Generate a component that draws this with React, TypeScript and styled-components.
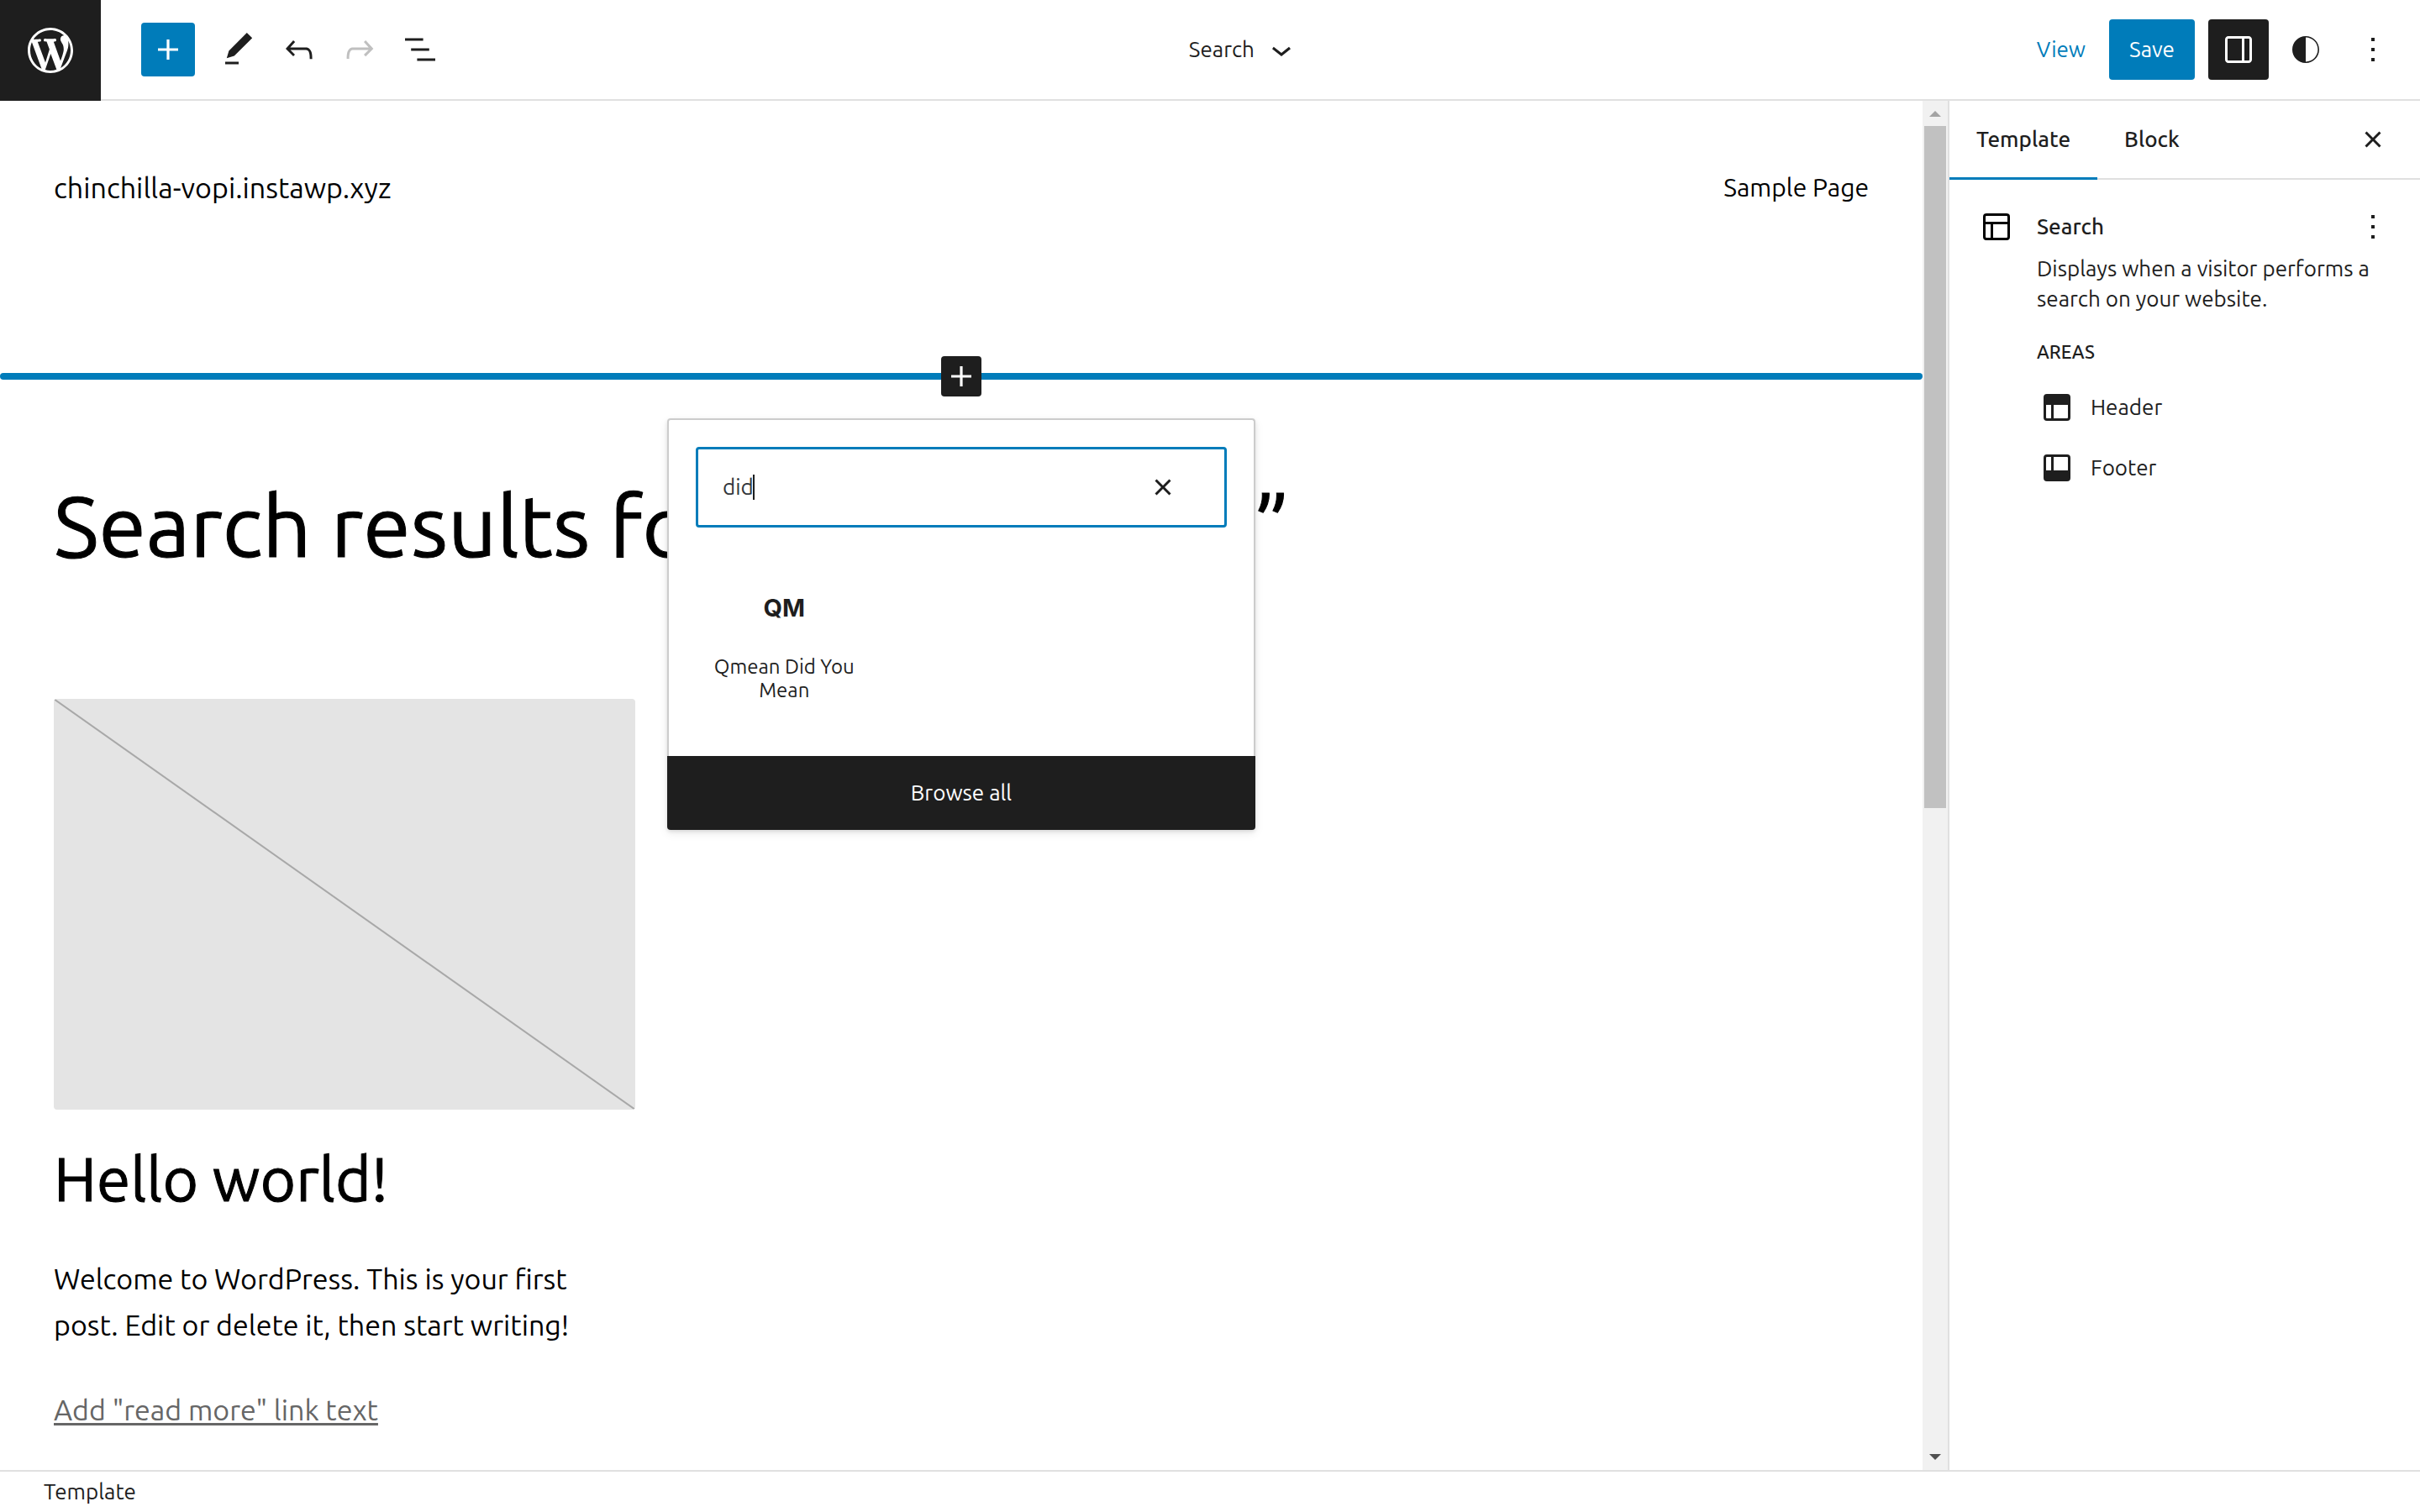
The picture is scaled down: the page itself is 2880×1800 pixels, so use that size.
import React, { useState } from 'react';
import styled, { createGlobalStyle } from 'styled-components';

const color = {
  ink: '#1e1e1e',
  accent: '#007cba',
  line: '#e0e0e0',
  muted: '#666',
};

const weight = {
  regular: 400,
  medium: 500,
};

const GlobalStyle = createGlobalStyle`
  *, *::before, *::after { box-sizing: border-box; }
  body {
    margin: 0;
    background: #fff;
    color: ${color.ink};
    font-family: "Ubuntu", "Noto Sans", sans-serif;
    font-size: 26px;
    font-weight: ${weight.regular};
    line-height: 36px;
  }
  h1, h2, h3, p, ul { margin: 0; padding: 0; }
  button, input { font: inherit; color: inherit; }
`;

/* ---------- icons ---------- */

const paths = {
  plus: 'M18 11.2h-5.2V6h-1.6v5.2H6v1.6h5.2V18h1.6v-5.2H18z',
  edit: 'M20.1 5.1L16.9 2 6.2 12.7l-1.3 4.4 4.5-1.3L20.1 5.1zM4 20.8h8v-1.5H4v1.5z',
  undo: 'M18.3 11.7c-.6-.6-1.4-.9-2.3-.9H6.7l2.9-3.3-1.1-1-4.5 5L8.5 16l1-1-2.7-2.7H16c.5 0 .9.2 1.3.5 1 1 1 3.4 1 4.5v.3h1.5v-.2c0-1.5 0-4.3-1.5-5.7z',
  redo: 'M15.6 6.5l-1.1 1 2.9 3.3H8c-.9 0-1.7.3-2.3.9-1.4 1.5-1.4 4.2-1.4 5.6v.2h1.5v-.3c0-1.1 0-3.5 1-4.5.3-.3.7-.5 1.3-.5h9.2L14.5 15l1.1 1.1 4.6-4.6-4.6-5z',
  listView: 'M13.8 5.2H3v1.5h10.8V5.2zm-3.6 12v1.5H21v-1.5H10.2zm7.2-6H6.6v1.5h10.8v-1.5z',
  chevronDown: 'M17.5 11.6L12 16l-5.5-4.4.9-1.2L12 14l4.5-3.6 1 1.2z',
  drawer:
    'M18 4H6c-1.1 0-2 .9-2 2v12c0 1.1.9 2 2 2h12c1.1 0 2-.9 2-2V6c0-1.1-.9-2-2-2zm-4 14.5H6c-.3 0-.5-.2-.5-.5V6c0-.3.2-.5.5-.5h8v13zm4.5-.5c0 .3-.2.5-.5.5h-2.5v-13H18c.3 0 .5.2.5.5v12z',
  styles:
    'M12 4c-4.4 0-8 3.6-8 8s3.6 8 8 8 8-3.6 8-8-3.6-8-8-8zm0 15.2V4.8c4 0 7.2 3.2 7.2 7.2s-3.2 7.2-7.2 7.2z',
  more: 'M13 19h-2v-2h2v2zm0-6h-2v-2h2v2zm0-6h-2V5h2v2z',
  close:
    'M12 13.06l3.712 3.713 1.061-1.06L13.061 12l3.712-3.712-1.06-1.06L12 10.938 8.288 7.227l-1.061 1.06L10.939 12l-3.712 3.712 1.06 1.061L12 13.061z',
  layout:
    'M18 5.5H6a.5.5 0 00-.5.5v3h13V6a.5.5 0 00-.5-.5zm.5 5H10v8h8a.5.5 0 00.5-.5v-7.5zm-10 0h-3V18a.5.5 0 00.5.5h2.5v-8zM6 4h12a2 2 0 012 2v12a2 2 0 01-2 2H6a2 2 0 01-2-2V6a2 2 0 012-2z',
  header:
    'M18.5 10.5H10v8h8a.5.5 0 00.5-.5v-7.5zm-10 0h-3V18a.5.5 0 00.5.5h2.5v-8zM6 4h12a2 2 0 012 2v12a2 2 0 01-2 2H6a2 2 0 01-2-2V6a2 2 0 012-2z',
  footer:
    'M18 5.5h-8v8h8.5V6a.5.5 0 00-.5-.5zm-9.5 8h-3V6a.5.5 0 01.5-.5h2.5v8zM6 4h12a2 2 0 012 2v12a2 2 0 01-2 2H6a2 2 0 01-2-2V6a2 2 0 012-2z',
};

const Glyph = styled.svg`
  display: block;
  flex: none;
  width: 48px;
  height: 48px;
  fill: currentColor;
`;

function Icon({ name }: { name: keyof typeof paths }) {
  return (
    <Glyph viewBox="0 0 24 24" aria-hidden="true">
      <path fillRule="evenodd" clipRule="evenodd" d={paths[name]} />
    </Glyph>
  );
}

const LogoGlyph = styled.svg`
  display: block;
  width: 54px;
  height: 54px;
  fill: #fff;
`;

function WordPressLogo() {
  return (
    <LogoGlyph viewBox="0 0 20 20" aria-hidden="true">
      <path d="M20 10c0-5.51-4.49-10-10-10C4.48 0 0 4.49 0 10c0 5.52 4.48 10 10 10 5.52 0 10-4.48 10-10zM7.78 15.37L4.37 6.22c.55-.02 1.17-.08 1.17-.08.5-.06.44-1.13-.06-1.11 0 0-1.45.11-2.37.11-.18 0-.37 0-.58-.01C4.12 2.69 6.87 1.11 10 1.11c2.33 0 4.45.87 6.05 2.34-.68-.11-1.65.39-1.65 1.58 0 .74.45 1.36.9 2.1.35.61.55 1.36.55 2.46 0 1.49-1.4 5-1.4 5l-3.03-8.37c.54-.02.82-.17.82-.17.5-.05.44-1.25-.06-1.22 0 0-1.44.12-2.38.12-.87 0-2.33-.12-2.33-.12-.5-.03-.56 1.2-.06 1.22l.92.08 1.26 3.41zM17.41 10c.24-.64.74-1.87.43-4.25.7 1.29 1.05 2.71 1.05 4.25 0 3.29-1.73 6.24-4.4 7.78.97-2.59 1.94-5.2 2.92-7.78zM6.1 18.09C3.12 16.65 1.11 13.53 1.11 10c0-1.3.23-2.48.72-3.59C3.25 10.3 4.67 14.2 6.1 18.09zm4.03-6.63l2.58 6.98c-.86.29-1.76.45-2.71.45-.79 0-1.57-.11-2.29-.33.81-2.38 1.62-4.74 2.42-7.1z" />
    </LogoGlyph>
  );
}

/* ---------- shell ---------- */

const Shell = styled.div`
  display: grid;
  grid-template-rows: auto minmax(0, 1fr) auto;
  height: 100vh;
`;

const TopBar = styled.header`
  display: flex;
  height: 120px;
`;

const HomeLink = styled.a`
  display: grid;
  place-items: center;
  flex: none;
  width: 120px;
  background: ${color.ink};
`;

const TopBarContent = styled.div`
  display: flex;
  flex: 1;
  align-items: center;
  justify-content: space-between;
  padding: 0 20px 0 48px;
  border-bottom: 2px solid ${color.line};
`;

const Tools = styled.div`
  display: flex;
  gap: 20px;
  padding-right: 28px;
`;

const ToolGroup = styled.div`
  display: flex;
  gap: 8px;
`;

const IconButton = styled.button<{ $size?: number; $tone?: 'accent' | 'dark' }>`
  display: grid;
  place-items: center;
  flex: none;
  width: ${(p) => p.$size ?? 72}px;
  height: ${(p) => p.$size ?? 72}px;
  padding: 0;
  border: 0;
  border-radius: 4px;
  background: ${(p) => (p.$tone === 'accent' ? color.accent : p.$tone === 'dark' ? color.ink : 'transparent')};
  color: ${(p) => (p.$tone ? '#fff' : color.ink)};

  &:disabled { color: #c0c0c0; }
`;

const DocumentButton = styled.button`
  display: flex;
  align-items: center;
  gap: 8px;
  padding: 0;
  border: 0;
  background: none;
`;

const Actions = styled.div`
  display: flex;
  align-items: center;
  gap: 8px;
`;

const ViewLink = styled.a`
  padding: 0 20px;
  color: ${color.accent};
  text-decoration: none;
`;

const SaveButton = styled.button`
  height: 72px;
  margin-right: 8px;
  padding: 0 24px;
  border: 0;
  border-radius: 4px;
  background: ${color.accent};
  color: #fff;
`;

const Workspace = styled.div`
  display: grid;
  grid-template-columns: minmax(0, 1fr) 30px 562px;
  min-height: 0;
`;

const StatusBar = styled.footer`
  padding: 6px 52px;
  border-top: 2px solid ${color.line};
`;

/* ---------- canvas ---------- */

const Canvas = styled.main`
  overflow: hidden;
  color: #000;
  font-size: 34px;
  line-height: 55px;
`;

const SiteHeader = styled.div`
  display: flex;
  align-items: center;
  justify-content: space-between;
  padding: 76px 64px 173px;
`;

const SiteLink = styled.a<{ $nav?: boolean }>`
  color: inherit;
  font-size: ${(p) => (p.$nav ? 30 : 34)}px;
  text-decoration: none;
`;

const Insertion = styled.div`
  position: relative;
  display: flex;
  align-items: center;
  justify-content: center;

  &::before {
    content: "";
    position: absolute;
    inset: 20px 0;
    border-radius: 4px;
    background: ${color.accent};
  }

  & > button { position: relative; }
`;

const PostArea = styled.div`
  padding: 92px 64px 44px;
`;

const QueryTitle = styled.h1`
  font-size: 102px;
  font-weight: ${weight.regular};
  line-height: 122px;
  -webkit-text-stroke: 1px currentColor;
`;

const PostGrid = styled.div`
  display: grid;
  grid-template-columns: repeat(3, minmax(0, 1fr));
  gap: 42px;
  margin-top: 146px;
`;

const Post = styled.article`
  display: flex;
  flex-direction: column;
  align-items: flex-start;
`;

const FeaturedImage = styled.svg`
  display: block;
  width: 100%;
  aspect-ratio: 692 / 489;
  border-radius: 4px;
  background: #e4e4e4;
  stroke: #a8a8a8;
  stroke-width: 2;
`;

const PostTitle = styled.h2`
  margin: 40px 0 50px;
  font-size: 73px;
  font-weight: ${weight.regular};
  line-height: 84px;
  -webkit-text-stroke: 1px currentColor;
`;

const ReadMore = styled.a`
  margin-top: 46px;
  color: ${color.muted};
  text-decoration: underline;
  text-decoration-thickness: 3px;
  text-underline-offset: 3px;
`;

/* ---------- quick inserter ---------- */

const Popover = styled.section`
  position: absolute;
  z-index: 1;
  top: 74px;
  left: 50%;
  width: 700px;
  margin-left: -350px;
  border-radius: 4px;
  background: #fff;
  box-shadow: 0 2px 4px rgba(0, 0, 0, 0.1), 0 4px 12px rgba(0, 0, 0, 0.08);
  color: ${color.ink};
  font-size: 26px;
  line-height: 36px;
`;

const PopoverBody = styled.div`
  padding: 32px;
  border: 2px solid #ccc;
  border-bottom: 0;
  border-radius: 4px 4px 0 0;
`;

const SearchField = styled.div`
  position: relative;
  display: flex;
  align-items: center;
  height: 96px;
  padding-right: 49px;
  border: 3px solid ${color.accent};
  border-radius: 4px;
`;

const SearchInput = styled.input`
  flex: 1;
  min-width: 0;
  height: 100%;
  padding: 0 0 2px 29px;
  border: 0;
  outline: 0;
  background: transparent;
  color: #32373c;
  caret-color: transparent;
`;

const Caret = styled.span`
  position: absolute;
  top: 30px;
  left: 65px;
  width: 2px;
  height: 30px;
  background: ${color.ink};
`;

const Results = styled.div`
  display: grid;
  grid-template-columns: repeat(3, minmax(0, 1fr));
  padding-top: 40px;
`;

const BlockOption = styled.button`
  display: flex;
  flex-direction: column;
  align-items: center;
  gap: 32px;
  padding: 32px 16px;
  border: 0;
  background: none;
  font-size: 24px;
  line-height: 28px;
`;

const BlockMark = styled.strong`
  font-family: "Inter", sans-serif;
  font-size: 29px;
  font-weight: 700;
  line-height: 48px;
`;

const BrowseAll = styled.button`
  display: block;
  width: 100%;
  height: 88px;
  border: 0;
  border-radius: 0 0 4px 4px;
  background: ${color.ink};
  color: #fff;
`;

/* ---------- scrollbar ---------- */

const Scrollbar = styled.div`
  display: flex;
  flex-direction: column;
  background: #f1f1f1;
`;

const ScrollArrow = styled.svg<{ $active?: boolean }>`
  display: block;
  flex: none;
  width: 30px;
  height: 30px;
  fill: ${(p) => (p.$active ? '#505050' : '#a3a3a3')};
`;

const ScrollTrack = styled.div`
  display: grid;
  flex: 1;
  grid-template-rows: 812fr 758fr;
  padding: 0 2px;
`;

const ScrollThumb = styled.div`
  background: #c1c1c1;
`;

/* ---------- settings sidebar ---------- */

const Sidebar = styled.aside`
  border-left: 2px solid ${color.line};
`;

const TabBar = styled.div`
  display: flex;
  height: 94px;
  padding-right: 20px;
  border-bottom: 2px solid ${color.line};
`;

const Tab = styled.button<{ $active?: boolean }>`
  height: 94px;
  padding: 0 32px 3px;
  border: 0;
  background: none;
  box-shadow: ${(p) => (p.$active ? `inset 0 -3px ${color.accent}` : 'none')};
  font-weight: ${weight.medium};
`;

const CloseSlot = styled.div`
  display: flex;
  align-items: center;
  margin-left: auto;
`;

const Card = styled.div`
  display: flex;
  gap: 24px;
  padding: 32px 20px 32px 32px;
`;

const CardIcon = styled.div`
  color: #000;
`;

const CardContent = styled.div`
  flex: 1;
  min-width: 0;
`;

const CardHeading = styled.div`
  display: flex;
  align-items: center;
  justify-content: space-between;
  height: 48px;
  margin-bottom: 8px;
`;

const CardTitle = styled.h2`
  font-size: 26px;
  font-weight: ${weight.medium};
`;

const AreasTitle = styled.h3`
  margin: 27px 0 12px;
  font-size: 22px;
  font-weight: ${weight.medium};
  line-height: 36px;
  text-transform: uppercase;
`;

const AreaList = styled.ul`
  list-style: none;
`;

const AreaButton = styled.button`
  display: flex;
  align-items: center;
  gap: 16px;
  height: 72px;
  padding: 0;
  border: 0;
  background: none;
`;

export default function App() {
  const [query, setQuery] = useState('did');

  return (
    <>
      <GlobalStyle />
      <Shell>
        <TopBar>
          <HomeLink href="#" aria-label="Back to dashboard">
            <WordPressLogo />
          </HomeLink>
          <TopBarContent>
            <Tools>
              <IconButton $size={64} $tone="accent" aria-label="Toggle block inserter"><Icon name="plus" /></IconButton>
              <ToolGroup>
                <IconButton $size={64} aria-label="Tools"><Icon name="edit" /></IconButton>
                <IconButton $size={64} aria-label="Undo"><Icon name="undo" /></IconButton>
                <IconButton $size={64} aria-label="Redo" disabled><Icon name="redo" /></IconButton>
                <IconButton $size={64} aria-label="List view"><Icon name="listView" /></IconButton>
              </ToolGroup>
            </Tools>
            <DocumentButton>
              Search
              <Icon name="chevronDown" />
            </DocumentButton>
            <Actions>
              <ViewLink href="#">View</ViewLink>
              <SaveButton>Save</SaveButton>
              <IconButton $tone="dark" aria-label="Settings"><Icon name="drawer" /></IconButton>
              <IconButton aria-label="Styles"><Icon name="styles" /></IconButton>
              <IconButton aria-label="Options"><Icon name="more" /></IconButton>
            </Actions>
          </TopBarContent>
        </TopBar>

        <Workspace>
          <Canvas>
            <SiteHeader>
              <SiteLink href="#">chinchilla-vopi.instawp.xyz</SiteLink>
              <SiteLink href="#" $nav>Sample Page</SiteLink>
            </SiteHeader>

            <Insertion>
              <IconButton $size={48} $tone="dark" aria-label="Add block"><Icon name="plus" /></IconButton>
              <Popover aria-label="Quick inserter">
                <PopoverBody>
                  <SearchField>
                    <SearchInput
                      type="text"
                      aria-label="Search for blocks"
                      value={query}
                      onChange={(e) => setQuery(e.target.value)}
                    />
                    <Caret />
                    <IconButton $size={48} aria-label="Reset search" onClick={() => setQuery('')}>
                      <Icon name="close" />
                    </IconButton>
                  </SearchField>
                  <Results>
                    <BlockOption>
                      <BlockMark>QM</BlockMark>
                      Qmean Did You Mean
                    </BlockOption>
                  </Results>
                </PopoverBody>
                <BrowseAll>Browse all</BrowseAll>
              </Popover>
            </Insertion>

            <PostArea>
              <QueryTitle>Search results for: “search term”</QueryTitle>
              <PostGrid>
                <Post>
                  <FeaturedImage viewBox="0 0 692 489" preserveAspectRatio="none" aria-hidden="true">
                    <line x1="0" y1="0" x2="692" y2="489" />
                  </FeaturedImage>
                  <PostTitle>Hello world!</PostTitle>
                  <p>Welcome to WordPress. This is your first post. Edit or delete it, then start writing!</p>
                  <ReadMore href="#">Add "read more" link text</ReadMore>
                </Post>
              </PostGrid>
            </PostArea>
          </Canvas>

          <Scrollbar aria-hidden="true">
            <ScrollArrow viewBox="0 0 30 30"><path d="M8 19l7-7 7 7z" /></ScrollArrow>
            <ScrollTrack><ScrollThumb /></ScrollTrack>
            <ScrollArrow viewBox="0 0 30 30" $active><path d="M8 11l7 7 7-7z" /></ScrollArrow>
          </Scrollbar>

          <Sidebar>
            <TabBar>
              <Tab $active>Template</Tab>
              <Tab>Block</Tab>
              <CloseSlot>
                <IconButton aria-label="Close settings"><Icon name="close" /></IconButton>
              </CloseSlot>
            </TabBar>
            <Card>
              <CardIcon><Icon name="layout" /></CardIcon>
              <CardContent>
                <CardHeading>
                  <CardTitle>Search</CardTitle>
                  <IconButton aria-label="Template actions"><Icon name="more" /></IconButton>
                </CardHeading>
                <p>Displays when a visitor performs a search on your website.</p>
                <AreasTitle>Areas</AreasTitle>
                <AreaList>
                  <li><AreaButton><Icon name="header" />Header</AreaButton></li>
                  <li><AreaButton><Icon name="footer" />Footer</AreaButton></li>
                </AreaList>
              </CardContent>
            </Card>
          </Sidebar>
        </Workspace>

        <StatusBar>Template</StatusBar>
      </Shell>
    </>
  );
}
